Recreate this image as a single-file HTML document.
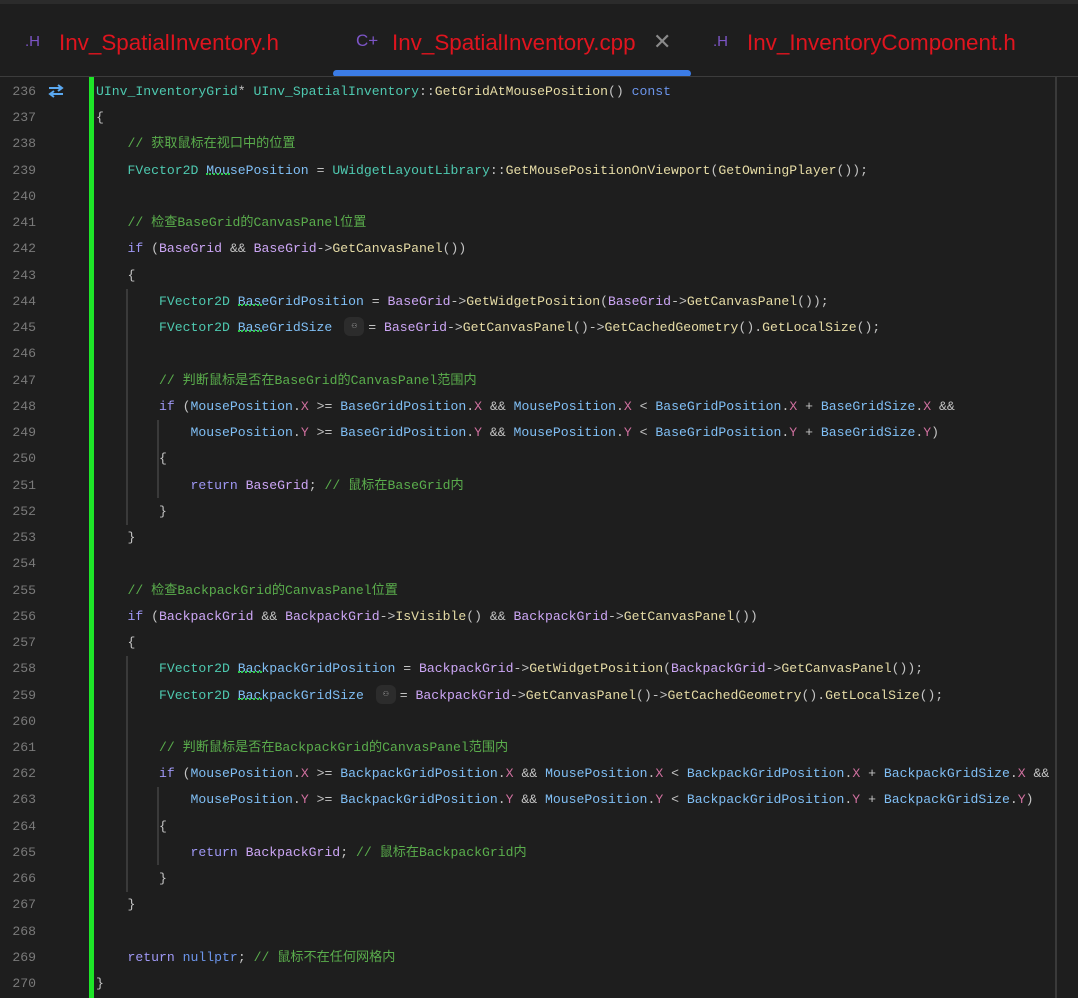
<!DOCTYPE html>
<html><head><meta charset="utf-8"><style>
*{margin:0;padding:0;box-sizing:border-box}
body{width:1078px;height:998px;background:#1e1e1e;overflow:hidden;position:relative;font-family:"Liberation Sans","Noto Sans CJK SC",sans-serif}
.top{position:absolute;left:0;top:0;width:1078px;height:4px;background:#2b2b2b}
.tab{position:absolute;top:30px;font-size:22.4px;color:#e0141e;white-space:nowrap}
.ic{font-size:15px;color:#7d55c7;margin-right:0;position:absolute;top:3px}
.x{position:absolute;left:653px;top:29px;color:#8a8a8a;font-size:22px}
.ul{position:absolute;left:333px;top:70px;width:358px;height:7px;background:#3b7ce6;border-radius:4px}
.sep{position:absolute;left:0;top:76px;width:1078px;height:1px;background:#3c3c3c}
.vr{position:absolute;left:1055px;top:77px;width:2px;height:921px;background:#3a3a3a}
.green{position:absolute;left:89px;top:77px;width:5px;height:921px;background:#1ee628}
.ln{position:absolute;left:0;width:36px;text-align:right;font:13.13px "Liberation Mono",monospace;color:#7a7a7a;line-height:26px}
.code{position:absolute;left:96px;white-space:pre;font:13.13px "Liberation Mono","Noto Sans CJK SC",monospace;color:#c4c4c4;line-height:26px}
.g{position:absolute;width:2px;background:#3a3a3a}
.t{color:#4ec9b0}.f{color:#e6dca6}.v{color:#80bff5}.m{color:#cca6f5}.p{color:#d0709f}.k{color:#9f98f5}.b{color:#6c95eb}.c{color:#5aad4c}
.u{position:relative}
.u::after{content:"";position:absolute;left:0;bottom:3px;width:24px;border-bottom:2px dotted #2ec94a}
.pill{display:inline-block;width:20px;height:19px;background:#2c2c2c;border-radius:6px;vertical-align:middle;margin-left:12px;margin-right:-4px;position:relative;top:-1px;text-align:center;font-size:9px;color:#aaa;line-height:19px}
</style></head><body>
<div class="top"></div>
<div class="tab" style="left:59px"><span class="ic" style="left:-34px">.H</span>Inv_SpatialInventory.h</div>
<div class="tab" style="left:392px"><span class="ic" style="left:-36px;font-size:17px;top:1px">C+</span>Inv_SpatialInventory.cpp</div>
<div class="x">✕</div>
<div class="tab" style="left:747px"><span class="ic" style="left:-34px">.H</span>Inv_InventoryComponent.h</div>
<div class="ul"></div>
<div class="sep"></div>
<div class="vr"></div>
<div class="green"></div>
<svg style="position:absolute;left:47px;top:84px" width="18" height="14" viewBox="0 0 18 14"><path d="M2 4H15M11 1l4 3-4 3M16 10H3M7 7l-4 3 4 3" stroke="#5aa8f0" stroke-width="2" fill="none"/></svg>
<div class="g" style="left:126px;top:289px;height:236px"></div>
<div class="g" style="left:157px;top:420px;height:78px"></div>
<div class="g" style="left:126px;top:656px;height:236px"></div>
<div class="g" style="left:157px;top:787px;height:78px"></div>
<div id="L"></div>
<script>
var lines=[
'<span class="t">UInv_InventoryGrid</span>* <span class="t">UInv_SpatialInventory</span>::<span class="f">GetGridAtMousePosition</span>() <span class="b">const</span>',
'{',
'    <span class="c">// 获取鼠标在视口中的位置</span>',
'    <span class="t">FVector2D</span> <span class="v u">MousePosition</span> = <span class="t">UWidgetLayoutLibrary</span>::<span class="f">GetMousePositionOnViewport</span>(<span class="f">GetOwningPlayer</span>());',
'',
'    <span class="c">// 检查BaseGrid的CanvasPanel位置</span>',
'    <span class="k">if</span> (<span class="m">BaseGrid</span> &amp;&amp; <span class="m">BaseGrid</span>-&gt;<span class="f">GetCanvasPanel</span>())',
'    {',
'        <span class="t">FVector2D</span> <span class="v u">BaseGridPosition</span> = <span class="m">BaseGrid</span>-&gt;<span class="f">GetWidgetPosition</span>(<span class="m">BaseGrid</span>-&gt;<span class="f">GetCanvasPanel</span>());',
'        <span class="t">FVector2D</span> <span class="v u">BaseGridSize</span><span class="pill">⚇</span> = <span class="m">BaseGrid</span>-&gt;<span class="f">GetCanvasPanel</span>()-&gt;<span class="f">GetCachedGeometry</span>().<span class="f">GetLocalSize</span>();',
'',
'        <span class="c">// 判断鼠标是否在BaseGrid的CanvasPanel范围内</span>',
'        <span class="k">if</span> (<span class="v">MousePosition</span>.<span class="p">X</span> &gt;= <span class="v">BaseGridPosition</span>.<span class="p">X</span> &amp;&amp; <span class="v">MousePosition</span>.<span class="p">X</span> &lt; <span class="v">BaseGridPosition</span>.<span class="p">X</span> + <span class="v">BaseGridSize</span>.<span class="p">X</span> &amp;&amp;',
'            <span class="v">MousePosition</span>.<span class="p">Y</span> &gt;= <span class="v">BaseGridPosition</span>.<span class="p">Y</span> &amp;&amp; <span class="v">MousePosition</span>.<span class="p">Y</span> &lt; <span class="v">BaseGridPosition</span>.<span class="p">Y</span> + <span class="v">BaseGridSize</span>.<span class="p">Y</span>)',
'        {',
'            <span class="k">return</span> <span class="m">BaseGrid</span>; <span class="c">// 鼠标在BaseGrid内</span>',
'        }',
'    }',
'',
'    <span class="c">// 检查BackpackGrid的CanvasPanel位置</span>',
'    <span class="k">if</span> (<span class="m">BackpackGrid</span> &amp;&amp; <span class="m">BackpackGrid</span>-&gt;<span class="f">IsVisible</span>() &amp;&amp; <span class="m">BackpackGrid</span>-&gt;<span class="f">GetCanvasPanel</span>())',
'    {',
'        <span class="t">FVector2D</span> <span class="v u">BackpackGridPosition</span> = <span class="m">BackpackGrid</span>-&gt;<span class="f">GetWidgetPosition</span>(<span class="m">BackpackGrid</span>-&gt;<span class="f">GetCanvasPanel</span>());',
'        <span class="t">FVector2D</span> <span class="v u">BackpackGridSize</span><span class="pill">⚇</span> = <span class="m">BackpackGrid</span>-&gt;<span class="f">GetCanvasPanel</span>()-&gt;<span class="f">GetCachedGeometry</span>().<span class="f">GetLocalSize</span>();',
'',
'        <span class="c">// 判断鼠标是否在BackpackGrid的CanvasPanel范围内</span>',
'        <span class="k">if</span> (<span class="v">MousePosition</span>.<span class="p">X</span> &gt;= <span class="v">BackpackGridPosition</span>.<span class="p">X</span> &amp;&amp; <span class="v">MousePosition</span>.<span class="p">X</span> &lt; <span class="v">BackpackGridPosition</span>.<span class="p">X</span> + <span class="v">BackpackGridSize</span>.<span class="p">X</span> &amp;&amp;',
'            <span class="v">MousePosition</span>.<span class="p">Y</span> &gt;= <span class="v">BackpackGridPosition</span>.<span class="p">Y</span> &amp;&amp; <span class="v">MousePosition</span>.<span class="p">Y</span> &lt; <span class="v">BackpackGridPosition</span>.<span class="p">Y</span> + <span class="v">BackpackGridSize</span>.<span class="p">Y</span>)',
'        {',
'            <span class="k">return</span> <span class="m">BackpackGrid</span>; <span class="c">// 鼠标在BackpackGrid内</span>',
'        }',
'    }',
'',
'    <span class="k">return</span> <span class="b">nullptr</span>; <span class="c">// 鼠标不在任何网格内</span>',
'}'];
var h='';
for(var i=0;i<lines.length;i++){var y=79+i*26.24;
h+='<div class="ln" style="top:'+y+'px">'+(236+i)+'</div><div class="code" style="top:'+y+'px">'+lines[i]+'</div>';}
document.getElementById('L').innerHTML=h;
</script>
</body></html>
